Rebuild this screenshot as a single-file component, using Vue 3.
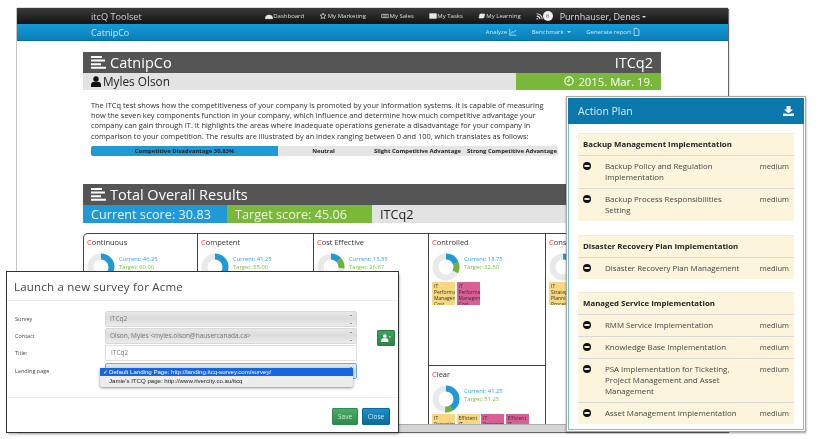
<script setup>
const nav = [
  { t: 'Dashboard', i: 'M.5 10a5.500 5.500 0 0 1 11 0z' },
  { t: 'My Marketing', i: 'M6 1.500l1.300 3 3.200.3-2.400 2.100.7 3.100L6 8.400 3.200 10l.7-3.100L1.500 4.800l3.200-.3z', o: 1 },
  { t: 'My Sales', i: 'M1 3.500h10v5H1zM4.500 3.500v5M7.500 3.500v5', o: 1 },
  { t: 'My Tasks', i: 'M1 2.500h10v7H1z' },
  { t: 'My Learning', i: 'M3 3h7L8.500 9h-7z' }
]
const cards = [
  { n: 'ontinuous', c: '46.25', t: '60.00', cur: 46.25, tar: 0, col: 0 },
  { n: 'ompetent', c: '41.25', t: '55.00', cur: 41.25, tar: 0, col: 1 },
  { n: 'ost Effective', c: '13.33', t: '26.67', cur: 13.33, tar: 13.34, col: 2 },
  { n: 'ontrolled', c: '18.75', t: '32.50', cur: 18.75, tar: 13.75, col: 3, tags: [['y', 'IT Performance Management Cost'], ['p', 'IT Performance Management Cost']] },
  { n: 'onsistent', c: '25.00', t: '40.00', cur: 10, tar: 0, col: 4, tags: [['y', 'IT Strategic Planning Process']] }
]
const circ = 2 * Math.PI * 10.5
const arc = (v) => `${(v / 100) * circ} ${circ}`
const rot = (v) => `rotate(${(v / 100) * 360 - 90} 14 14)`
const groups = [
  { h: 'Backup Management Implementation', items: ['Backup Policy and Regulation Implementation', 'Backup Process Responsibilities Setting'] },
  { h: 'Disaster Recovery Plan Implementation', items: ['Disaster Recovery Plan Management'] },
  { h: 'Managed Service Implementation', items: ['RMM Service Implementation', 'Knowledge Base Implementation', 'PSA Implementation for Ticketing, Project Management and Asset Management', 'Asset Management Implementation'] }
]
</script>

<template>
  <div class="stage">
    <section class="win main">
      <header class="nav1">
        <span class="brand">itcQ Toolset</span>
        <nav class="links">
          <span v-for="n in nav" :key="n.t" class="lnk">
            <svg width="8" height="8" viewBox="0 0 12 12"><path :d="n.i" :fill="n.o ? 'none' : '#e8e8e8'" stroke="#e8e8e8" stroke-width="1"/></svg>{{ n.t }}
          </span>
          <span class="rss">
            <svg width="7" height="7" viewBox="0 0 10 10"><path d="M1 1a8 8 0 0 1 8 8M1 4.500A4.500 4.500 0 0 1 5.500 9" fill="none" stroke="#ddd" stroke-width="1.600"/><circle cx="1.800" cy="8.200" r="1.200" fill="#ddd"/></svg>
            <b class="badge">6</b>
          </span>
          <span class="user">Purnhauser, Denes<i class="caret"></i></span>
        </nav>
      </header>
      <header class="nav2">
        <span class="company">CatnipCo</span>
        <nav class="sub">
          <span>Analyze
            <svg width="8" height="8" viewBox="0 0 10 10"><path d="M1 1v8h8M2.500 7l2-2.500 1.500 1L9 2.500" fill="none" stroke="#cfe9f7" stroke-width="1"/></svg>
          </span>
          <span>Benchmark<i class="caret small"></i></span>
          <span>Generate report
            <svg width="7" height="8" viewBox="0 0 8 10"><path d="M1 .5h4l2 2v7H1z" fill="none" stroke="#cfe9f7" stroke-width="1"/></svg>
          </span>
        </nav>
      </header>

      <div class="content">
        <div class="titlebar">
          <span class="ttl"><svg class="lines" viewBox="0 0 15 13"><path d="M0 0h11v2H0zM0 3.600h14v2H0zM0 7.200h10v2H0zM0 10.800h15v2H0z" fill="#fff"/></svg>CatnipCo</span>
          <span>ITCq2</span>
        </div>
        <div class="subbar">
          <span class="person">
            <svg width="10" height="11" viewBox="0 0 11 12"><circle cx="5.500" cy="3.200" r="3" fill="#111"/><path d="M0 12V9.500C0 7.500 1.500 6.300 3 6.300h5c1.500 0 3 1.200 3 3.200V12z" fill="#111"/></svg>
            Myles Olson
          </span>
          <span class="date">
            <svg width="10" height="10" viewBox="0 0 12 12"><circle cx="6" cy="6" r="5" fill="none" stroke="#fff" stroke-width="1.400"/><path d="M6 3v3.300H3.500" fill="none" stroke="#fff" stroke-width="1.200"/></svg>
            2015. Mar. 19.
          </span>
        </div>

        <p class="intro">The ITCq test shows how the competitiveness of your company is promoted by your information systems. It is capable of measuring how the seven key components function in your company, which influence and determine how much competitive advantage your company can gain through IT. It highlights the areas where inadequate operations generate a disadvantage for your company in comparison to your competition. The results are illustrated by an index ranging between 0 and 100, which translates as follows:</p>

        <div class="scale">
          <span class="s1">Competitive Disadvantage 30.83%</span>
          <span class="s2">Neutral</span>
          <span class="s3">Slight Competitive Advantage</span>
          <span class="s4">Strong Competitive Advantage</span>
        </div>

        <div class="titlebar total">
          <span class="ttl"><svg class="lines" viewBox="0 0 15 13"><path d="M0 0h11v2H0zM0 3.600h14v2H0zM0 7.200h10v2H0zM0 10.800h15v2H0z" fill="#fff"/></svg>Total Overall Results</span>
        </div>
        <div class="scores">
          <span class="cur">Current score: 30.83</span>
          <span class="tar">Target score: 45.06</span>
          <span class="nm">ITCq2</span>
        </div>

        <div class="board">
          <div v-for="c in cards" :key="c.n" class="card" :class="'c' + c.col">
            <h4><em>C</em>{{ c.n }}</h4>
            <div class="stat">
              <svg width="28" height="28" viewBox="0 0 28 28">
                <circle cx="14" cy="14" r="10.500" fill="none" stroke="#e9e9e9" stroke-width="6"/>
                <circle cx="14" cy="14" r="10.500" fill="none" stroke="#1f9ad6" stroke-width="6" :stroke-dasharray="arc(c.cur)" transform="rotate(-90 14 14)"/>
                <circle v-if="c.tar" cx="14" cy="14" r="10.500" fill="none" stroke="#6fb13a" stroke-width="6" :stroke-dasharray="arc(c.tar)" :transform="rot(c.cur)"/>
              </svg>
              <div class="nums"><span class="b">Current: {{ c.c }}</span><span class="g">Target: {{ c.t }}</span></div>
            </div>
            <div v-if="c.tags" class="tags">
              <span v-for="(t, i) in c.tags" :key="i" class="tag" :class="t[0]">{{ t[1] }}</span>
            </div>
          </div>
          <div class="card clear">
            <h4><em>C</em>lear</h4>
            <div class="stat">
              <svg width="28" height="28" viewBox="0 0 28 28">
                <circle cx="14" cy="14" r="10.500" fill="none" stroke="#e9e9e9" stroke-width="6"/>
                <circle cx="14" cy="14" r="10.500" fill="none" stroke="#1f9ad6" stroke-width="6" :stroke-dasharray="arc(41.25)" transform="rotate(-90 14 14)"/>
                <circle cx="14" cy="14" r="10.500" fill="none" stroke="#6fb13a" stroke-width="6" :stroke-dasharray="arc(10)" :transform="rot(41.25)"/>
              </svg>
              <div class="nums"><span class="b">Current: 41.25</span><span class="g">Target: 51.25</span></div>
            </div>
            <div class="tags">
              <span class="tag y">IT Reporting</span><span class="tag y">Efficient IT</span><span class="tag p">IT Reporting</span><span class="tag p">Efficient IT</span>
            </div>
          </div>
        </div>
        <div class="hscroll"></div>
      </div>
    </section>

    <section class="win modal">
      <h3>Launch a new survey for Acme</h3>
      <form class="form">
        <label>Survey</label>
        <div class="sel">ITCq2<i class="updown"></i></div>
        <label>Contact</label>
        <div class="sel">Olson, Myles &lt;myles.olson@hausercanada.ca&gt;<i class="updown"></i></div>
        <label class="l3">Title:</label>
        <div class="inp">ITCq2</div>
        <label>Landing page</label>
        <div class="sel focus"><i class="updown"></i></div>
        <button type="button" class="addbtn">
          <svg width="10" height="8" viewBox="0 0 12 10"><circle cx="4.500" cy="2.500" r="2.300" fill="#fff"/><path d="M0 10V8c0-1.800 1.500-2.800 3-2.800h3C7.500 5.200 9 6.200 9 8v2zM9.500 3h2.500v1.200H9.500z" fill="#fff"/></svg>
        </button>
        <div class="menu">
          <div class="opt on"><span class="chk">✓</span>Default Landing Page: http://landing.itcq-survey.com/survey/</div>
          <div class="opt">Jamie's ITCQ page: http://www.rivercity.co.au/itcq</div>
        </div>
      </form>
      <footer class="foot">
        <button type="button" class="btn save">Save</button>
        <button type="button" class="btn close">Close</button>
      </footer>
    </section>

    <section class="win plan">
      <header class="planhead">
        <span>Action Plan</span>
        <svg width="11" height="10" viewBox="0 0 11 10"><path d="M3.500 0h4v3.500h2.500L5.500 7.500 1 3.500h2.500zM0 7.500h3l2.500 1 2.500-1h3V10H0z" fill="#fff"/></svg>
      </header>
      <div class="planbody">
        <div v-for="g in groups" :key="g.h" class="group">
          <div class="grouph">{{ g.h }}</div>
          <div v-for="it in g.items" :key="it" class="row">
            <svg class="minus" width="8" height="8" viewBox="0 0 8 8"><circle cx="4" cy="4" r="4" fill="#111"/><rect x="1.500" y="3.100" width="5" height="1.800" fill="#fff"/></svg>
            <span class="rt">{{ it }}</span>
            <span class="rm">medium</span>
          </div>
        </div>
      </div>
    </section>
  </div>
</template>

<style>
body { margin: 0; background: #fff; }
</style>

<style scoped>
.stage {
  position: relative;
  width: 819px;
  height: 439px;
  overflow: hidden;
  background: #fff;
  font-family: "Open Sans", "Noto Sans", sans-serif;
  color: #333;
  filter: blur(.3px);
}
.win { position: absolute; background: #fff; box-sizing: border-box; }
svg { flex: none; }

.main {
  left: 17px; top: 8px; width: 711px; height: 424px;
  box-shadow: 1px 1px 1px rgba(0,0,0,.6), -1px 0 0 #c4c4c4, 0 -1px 0 #ddd;
  display: flex; flex-direction: column;
  overflow: hidden;
}
.nav1 {
  height: 16px; flex: none;
  background: linear-gradient(#3a3a3a, #141414);
  display: flex; align-items: center; justify-content: space-between;
  padding: 0 82px 0 74px; color: #ddd;
}
.brand { font-size: 9.200px; color: #cfcfcf; }
.links { display: flex; align-items: center; font-size: 6px; color: #ddd; }
.lnk { display: inline-flex; align-items: center; gap: .5px; margin-right: 15px; }
.rss { display: inline-flex; align-items: center; gap: 0; margin: 0 7px 0 0; }
.badge {
  width: 10px; height: 10px; border-radius: 50%; background: #eee; color: #555;
  font-size: 6px; font-weight: 400; display: inline-flex; align-items: center; justify-content: center;
}
.user { font-size: 9px; color: #ddd; }
.caret {
  display: inline-block; margin-left: 2px; vertical-align: middle;
  border: 2px solid transparent; border-top-color: currentColor; border-bottom: 0;
}
.nav2 {
  height: 17px; flex: none;
  background: linear-gradient(#159ad6, #0a7fb8);
  border-bottom: 1px solid #086f9f;
  box-sizing: border-box;
  display: flex; align-items: center; justify-content: space-between;
  padding: 0 88px 0 74px; color: #cfe9f7;
}
.company { font-size: 9px; }
.sub { display: flex; align-items: center; gap: 15px; font-size: 6px; }
.sub span { display: inline-flex; align-items: center; gap: 1.500px; }

.content { flex: 1; padding: 11px 67px 0 66px; display: flex; flex-direction: column; position: relative; min-height: 0; }
.titlebar {
  height: 20.500px; flex: none; background: #555; color: #fff;
  display: flex; align-items: center; justify-content: space-between;
  padding: 0 8px; font-size: 14.500px; box-sizing: border-box;
}
.ttl { display: inline-flex; align-items: center; gap: 4px; }
.lines { width: 15px; height: 13px; }
.subbar { height: 17px; flex: none; background: #e3e3e3; display: flex; justify-content: space-between; font-size: 11.800px; color: #222; }
.person { display: inline-flex; align-items: center; gap: 2px; padding-left: 8px; }
.date {
  width: 145px; background: #7ab83a; color: #fff; display: inline-flex; align-items: center;
  justify-content: flex-end; gap: 4px; padding-right: 8px; box-sizing: border-box; font-size: 11.300px;
}
.intro { margin: 10px 0 0 8px; width: 462px; font-size: 7.400px; line-height: 10.400px; color: #2d2d2d; }
.scale {
  margin: 5px 0 0 8px; width: 467px; height: 10px; flex: none;
  background: #e5e5e5; border-radius: 2px;
  display: flex; font-size: 5.900px; font-weight: 700; color: #222;
  line-height: 10px; text-align: center; overflow: hidden; white-space: nowrap;
}
.s1 { width: 187px; background: #1f9ad6; }
.s2 { width: 91px; }
.s3 { width: 97px; }
.s4 { width: 92px; }
.total { margin-top: 28px; }
.scores { height: 18px; flex: none; display: flex; font-size: 12.700px; line-height: 18px; }
.cur { width: 144px; background: #1f9ad6; color: #e6f5fd; padding-left: 8px; box-sizing: border-box; }
.tar { width: 145px; background: #7ab83a; color: #eef7e3; padding-left: 8px; box-sizing: border-box; }
.nm { flex: 1; background: #e3e3e3; color: #222; padding-left: 8px; }

.board {
  margin-top: 10px; width: 578px; height: 192px; flex: none;
  display: grid;
  grid-template-columns: 115px 116px 115px 117px 115px;
  grid-template-rows: 133px 59px;
  overflow: hidden;
}
.card { border: 1px solid #444; border-width: 1px 1px 0 0; padding: 3px 0 0 3px; box-sizing: border-box; overflow: hidden; min-width: 0; }
.c0 { border-left: 1px solid #444; border-top-left-radius: 5px; }
.c0, .c1, .c2 { grid-row: 1 / span 2; }
.c3 { border-bottom: 1px solid #444; }
.c4 { grid-row: 1 / span 2; grid-column: 5; border-right: 0; }
.clear { grid-column: 4; grid-row: 2; border-top: 0; }
h4 { margin: 0; font-size: 7.500px; font-weight: 400; color: #333; line-height: 11px; white-space: nowrap; }
h4 em { font-style: normal; color: #f52f2f; }
.stat { display: flex; align-items: flex-start; gap: 4px; margin-top: 5px; }
.nums { display: flex; flex-direction: column; font-size: 5.800px; line-height: 8px; white-space: nowrap; margin-top: 2px; }
.b { color: #2aa3e0; }
.g { color: #80bb42; }
.tags { display: flex; gap: 1.500px; margin-top: 1px; }
.tag {
  width: 23px; height: 23px; flex: none; overflow: hidden; font-size: 5px; line-height: 6px;
  padding: 1px 0 0 2px; box-sizing: border-box; color: #333;
}
.y { background: #f7d77f; }
.p { background: #d95f96; }
.hscroll {
  position: absolute; left: 0; right: 0; bottom: 0; height: 7px; background: #d5d5d5;
  border-top: 1px solid #aaa;
}

.modal {
  left: 7px; top: 272px; width: 391px; height: 160px;
  box-shadow: 0 0 0 1px #333, 1px 2px 3px rgba(0,0,0,.35);
  display: flex; flex-direction: column;
}
.modal h3 { margin: 0; height: 29px; flex: none; padding-left: 7px; font-size: 11.500px; font-weight: 400; line-height: 30px; color: #444; letter-spacing: .2px; border-bottom: 1px solid #eee; box-sizing: border-box; }
.form {
  position: relative; flex: 1;
  display: grid;
  grid-template-columns: 90px 252px;
  grid-auto-rows: 17.300px;
  padding: 9px 0 0 8px;
  align-items: center; font-size: 6px; color: #555;
}
label { font-size: 5.500px; color: #444; }
.sel {
  height: 16px; background: linear-gradient(#e8e8e8, #dcdcdc 45%, #ececec);
  border: 1px solid #d8d8d8; border-radius: 2px; box-sizing: border-box;
  line-height: 14px; padding-left: 4px; font-size: 6.500px; color: #777; position: relative;
}
.focus { border-color: #66afe9; }
.inp { height: 16px; box-sizing: border-box; border: 1px solid #e0e0e0; line-height: 14px; padding-left: 5px; font-size: 6.500px; color: #777; background: #fff; }
.updown { position: absolute; right: 3px; top: 4px; height: 7px; width: 3px; border-left: 0; }
.updown::before, .updown::after { content: ""; position: absolute; left: 0; border: 1.500px solid transparent; }
.updown::before { top: -1px; border-bottom-color: #444; border-top: 0; }
.updown::after { bottom: -1px; border-top-color: #444; border-bottom: 0; }
.addbtn {
  position: absolute; left: 370px; top: 29px; width: 18px; height: 16px; padding: 0;
  background: linear-gradient(#3fa25c, #2a8647); border: 1px solid #2a7d45; border-radius: 1px;
  display: flex; align-items: center; justify-content: center;
}
.menu {
  position: absolute; left: 93px; top: 67px; width: 253px; height: 19px;
  background: #ececec; border-radius: 2px;
  box-shadow: 0 1px 3px rgba(0,0,0,.45);
  font-family: "Liberation Sans", Arial, sans-serif; font-size: 6.100px; color: #222;
}
.opt { height: 8px; line-height: 8px; padding-left: 9px; position: relative; margin-top: 1px; white-space: nowrap; }
.opt.on { background: #1766e0; color: #fff; height: 8px; margin-top: 0; }
.chk { position: absolute; left: 2.500px; }
.foot {
  height: 35px; flex: none; border-top: 1px solid #eee; box-sizing: border-box;
  display: flex; justify-content: flex-end; align-items: center; gap: 4px; padding: 2px 8px 0 0;
}
.btn { height: 17px; font: 6.500px "Open Sans", sans-serif; color: #cfe8dc; border-radius: 1px; padding: 0; }
.save { width: 26px; background: linear-gradient(#48ad68, #2f8a4d); border: 1px solid #2f8a4d; }
.close { width: 28px; background: linear-gradient(#1c8fc7, #0a6a9c); border: 1px solid #0a6a9c; color: #cfe6f2; }

.plan {
  left: 566px; top: 96px; width: 240px; height: 336px;
  border: 1px solid #a9a9a9;
  box-shadow: 0 1px 2px rgba(0,0,0,.4);
  display: flex; flex-direction: column;
  padding: 1px;
}
.planhead {
  height: 26px; flex: none; background: #0a78ab; color: #d5ebf5;
  display: flex; align-items: center; justify-content: space-between;
  padding: 0 10px; font-size: 10.500px; box-sizing: border-box;
}
.planbody {
  flex: 1; border: 1px solid #7cbfdc; border-top: 0; padding: 9px 9px 0; box-sizing: border-box; overflow: hidden;
}
.group { background: #fcf5dc; margin-bottom: 13.500px; border-top: 1px solid #f1ecd9; }
.group:last-child { margin-bottom: 0; }
.grouph { font-size: 7.850px; font-weight: 700; color: #222; line-height: 11px; padding: 5px 5px 5px 5px; }
.row {
  display: flex; align-items: flex-start; border-top: 1px solid #d9d9d9;
  padding: 5px 5px; font-size: 7.900px; line-height: 11px; color: #444;
}
.minus { margin-top: 1px; }
.rt { margin-left: 14px; flex: 1; min-width: 0; padding-right: 15px; }
.rm { flex: none; font-size: 7.500px; }
</style>
